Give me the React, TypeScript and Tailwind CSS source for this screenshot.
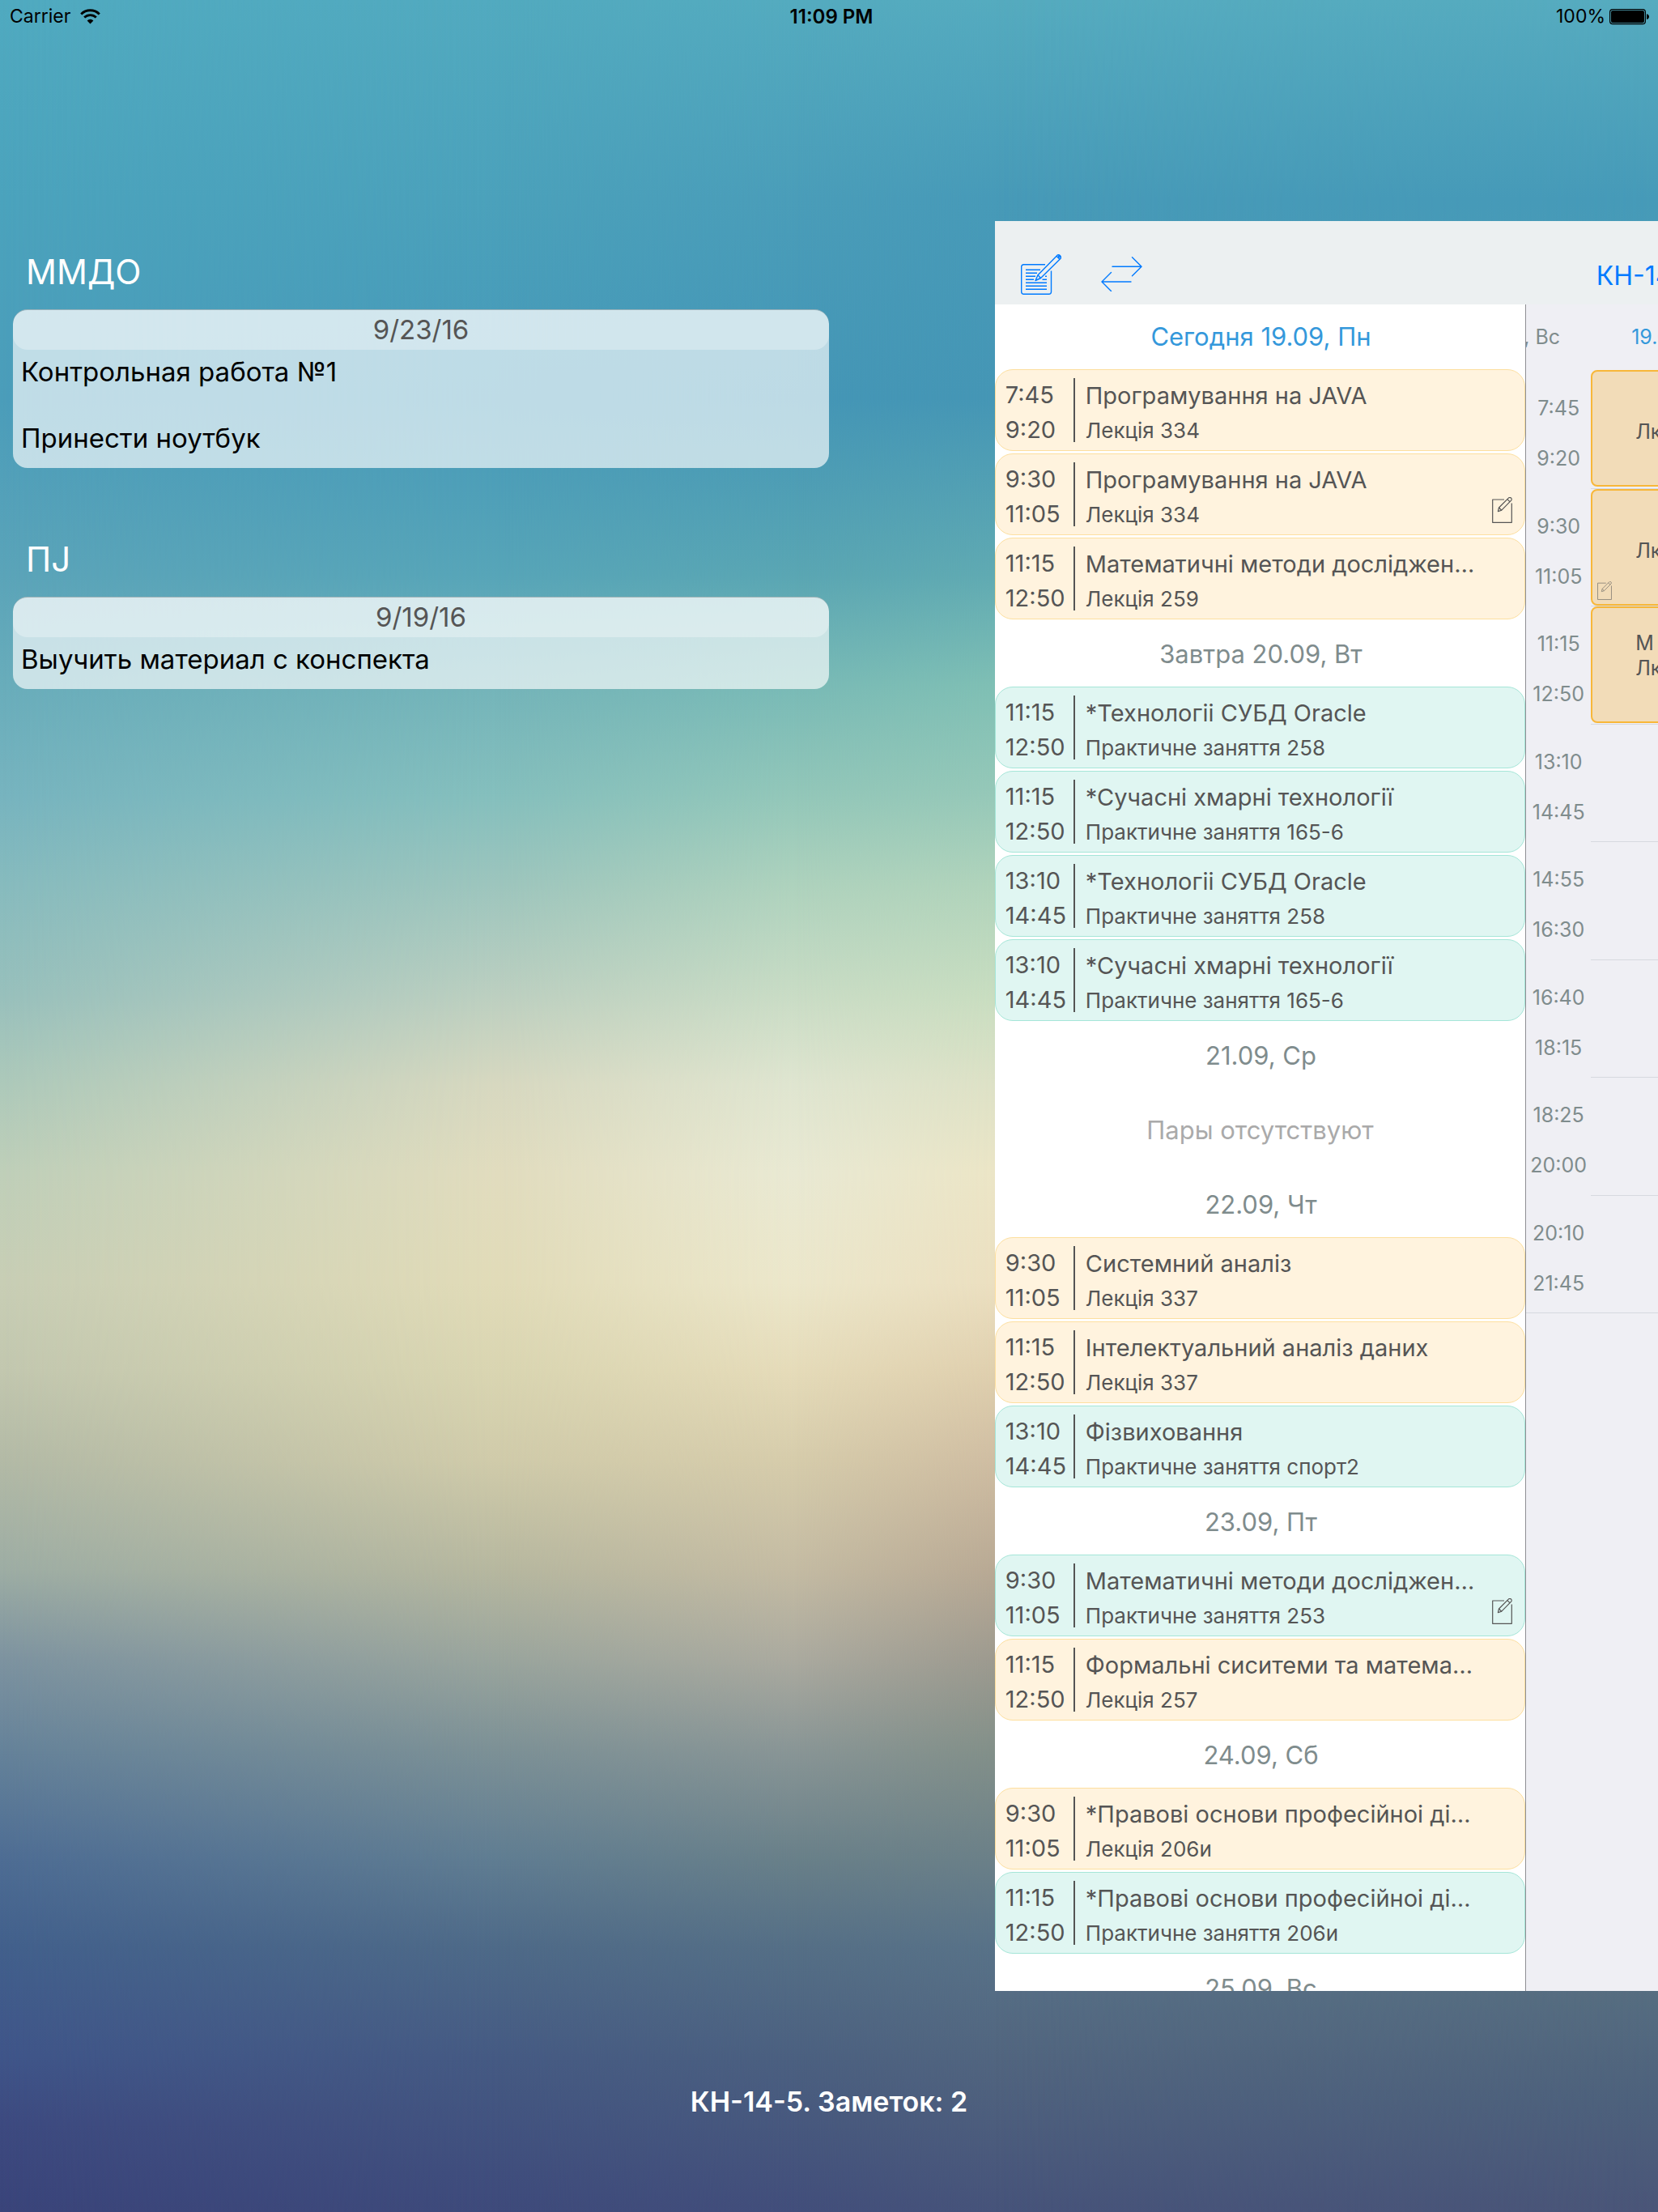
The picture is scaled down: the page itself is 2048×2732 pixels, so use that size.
import type { ReactNode } from "react";

type Kind = "lecture" | "practice";
type Lesson = { from: string; to: string; title: string; place: string; kind: Kind; note?: boolean };
type Day = { label: string; today?: boolean; lessons: Lesson[]; cut?: boolean };

const days: Day[] = [
  {
    label: "Сегодня 19.09, Пн",
    today: true,
    lessons: [
      { from: "7:45", to: "9:20", title: "Програмування на JAVA", place: "Лекція 334", kind: "lecture" },
      { from: "9:30", to: "11:05", title: "Програмування на JAVA", place: "Лекція 334", kind: "lecture", note: true },
      { from: "11:15", to: "12:50", title: "Математичні методи досліджен…", place: "Лекція 259", kind: "lecture" },
    ],
  },
  {
    label: "Завтра 20.09, Вт",
    lessons: [
      { from: "11:15", to: "12:50", title: "*Технологіі СУБД Oracle", place: "Практичне заняття 258", kind: "practice" },
      { from: "11:15", to: "12:50", title: "*Сучасні хмарні технології", place: "Практичне заняття 165-6", kind: "practice" },
      { from: "13:10", to: "14:45", title: "*Технологіі СУБД Oracle", place: "Практичне заняття 258", kind: "practice" },
      { from: "13:10", to: "14:45", title: "*Сучасні хмарні технології", place: "Практичне заняття 165-6", kind: "practice" },
    ],
  },
  { label: "21.09, Ср", lessons: [] },
  {
    label: "22.09, Чт",
    lessons: [
      { from: "9:30", to: "11:05", title: "Системний аналіз", place: "Лекція 337", kind: "lecture" },
      { from: "11:15", to: "12:50", title: "Інтелектуальний аналіз даних", place: "Лекція 337", kind: "lecture" },
      { from: "13:10", to: "14:45", title: "Фізвиховання", place: "Практичне заняття спорт2", kind: "practice" },
    ],
  },
  {
    label: "23.09, Пт",
    lessons: [
      { from: "9:30", to: "11:05", title: "Математичні методи досліджен…", place: "Практичне заняття 253", kind: "practice", note: true },
      { from: "11:15", to: "12:50", title: "Формальні сиситеми та матема…", place: "Лекція 257", kind: "lecture" },
    ],
  },
  {
    label: "24.09, Сб",
    lessons: [
      { from: "9:30", to: "11:05", title: "*Правові основи професійноі ді…", place: "Лекція 206и", kind: "lecture" },
      { from: "11:15", to: "12:50", title: "*Правові основи професійноі ді…", place: "Практичне заняття 206и", kind: "practice" },
    ],
  },
  { label: "25.09, Вс", lessons: [], cut: true },
];

const slots: { from: string; to: string; lines?: string[]; note?: boolean }[] = [
  { from: "7:45", to: "9:20", lines: ["", "Лк", ""] },
  { from: "9:30", to: "11:05", lines: ["", "Лк", ""], note: true },
  { from: "11:15", to: "12:50", lines: ["М", "Лк", ""] },
  { from: "13:10", to: "14:45" },
  { from: "14:55", to: "16:30" },
  { from: "16:40", to: "18:15" },
  { from: "18:25", to: "20:00" },
  { from: "20:10", to: "21:45" },
];

const notes = [
  { subject: "ММДО", date: "9/23/16", text: "Контрольная работа №1\n\nПринести ноутбук" },
  { subject: "ПJ", date: "9/19/16", text: "Выучить материал с конспекта" },
];

function WifiIcon() {
  return (
    <svg viewBox="0 0 25 19" className="h-[19px] w-[25px]" fill="none" stroke="currentColor" strokeWidth="2.8">
      <path d="M1.2 6.4a16 16 0 0 1 22.6 0" />
      <path d="M5.2 10.6a10.4 10.4 0 0 1 14.6 0" />
      <path d="M12.5 18.4 8.6 14.4a5.6 5.6 0 0 1 7.8 0Z" fill="currentColor" stroke="none" />
    </svg>
  );
}

function BatteryIcon() {
  return (
    <svg viewBox="0 0 50 20" className="h-5 w-[50px]" fill="none">
      <rect x="0.6" y="0.6" width="43.8" height="18" rx="3.4" stroke="black" strokeWidth="1.2" />
      <rect x="2" y="2" width="41" height="15.2" rx="2.2" fill="black" />
      <path d="M46 6.2c2 .4 3 1.6 3 3.4s-1 3-3 3.4Z" fill="black" />
    </svg>
  );
}

function ComposeIcon() {
  return (
    <svg viewBox="0 0 51 51" className="size-[51px]" fill="none" stroke="currentColor" strokeWidth="1.4" strokeLinejoin="round">
      <path d="M30 13.7H3.6A3 3 0 0 0 .7 16.6v30.8a3 3 0 0 0 2.9 2.9h31a3 3 0 0 0 2.9-2.9V21.4" />
      <path d="M6 20.3h18M6 24.3h14M6 28.3h12M6 32.3h10M6 36.3h26M6 40.3h26M6 44.3h26M30 28.3h2M26.500 32.3H32" />
      <path d="M18 33.500 21 26.800 45.300 1.900a3.200 3.200 0 0 1 4 4L24.500 30.500Z" />
      <path d="M21 26.800l3.500 3.700M44 3.300l4 4" />
      <circle cx="47.400" cy="3.800" r="1" />
    </svg>
  );
}

function SwapIcon() {
  return (
    <svg viewBox="0 0 51 43" className="h-[43px] w-[51px]" fill="none" stroke="currentColor" strokeWidth="1.4" strokeLinecap="round">
      <path d="M14 12.300h36M38.500.8 50 12.300 38.500 23.800" />
      <path d="M37 31H1M12.500 19.500 1 31l11.500 11.500" />
    </svg>
  );
}

function NoteIcon({ className }: { className: string }) {
  return (
    <svg viewBox="0 0 25 32" className={className} fill="none" stroke="currentColor" strokeWidth="1.2" strokeLinejoin="round">
      <path d="M15 3H.7v28.300h23.600V7.500" />
      <path d="M7.400 17.600l1.100-4.600L20.300 1.200a2 2 0 0 1 3.300 3L11.800 16.200Z" />
      <path d="M18.900 2.600l3 3M8.500 13l3.300 3.200" />
    </svg>
  );
}

const cardTone: Record<Kind, string> = {
  lecture: "border-[#fddf9f] bg-[#fff3de]",
  practice: "border-[#a5e6d8] bg-[#e0f6f2]",
};

function LessonCard({ lesson }: { lesson: Lesson }) {
  return (
    <li className={`relative mb-[3px] flex h-[101px] items-center rounded-[22px] border pl-3 text-[#555555] ${cardTone[lesson.kind]}`}>
      <div className="flex w-[84px] shrink-0 flex-col pt-1 text-[29px] leading-[43px]">
        <span>{lesson.from}</span>
        <span>{lesson.to}</span>
      </div>
      <div className="h-[79px] w-[2px] shrink-0 bg-[#555555]" />
      <div className="flex min-w-0 flex-1 flex-col pt-[6px] pl-[13px] leading-[43px] whitespace-nowrap">
        <span className="text-[29px]">{lesson.title}</span>
        <span className="text-[26px]">{lesson.place}</span>
      </div>
      {lesson.note && <NoteIcon className="absolute right-[15px] bottom-[14px] h-8 w-[25px]" />}
    </li>
  );
}

function DayHeading({ today, children }: { today?: boolean; children: ReactNode }) {
  return (
    <h2 className={`flex h-20 items-center justify-center pl-[2px] text-[31px] ${today ? "text-[#3498db]" : "text-[#7f8c8d]"}`}>
      {children}
    </h2>
  );
}

function Agenda() {
  return (
    <div className="h-full w-4/5 shrink-0 overflow-hidden bg-white">
      {days.map((day) => (
        <section key={day.label}>
          <DayHeading today={day.today}>{day.label}</DayHeading>
          {day.lessons.length > 0 ? (
            <ul>
              {day.lessons.map((lesson, i) => (
                <LessonCard key={i} lesson={lesson} />
              ))}
            </ul>
          ) : (
            !day.cut && <p className="flex h-[104px] items-center justify-center text-[31px] text-[#aaaaaa]">Пары отсутствуют</p>
          )}
        </section>
      ))}
    </div>
  );
}

function WeekGrid() {
  return (
    <div className="min-w-0 flex-1 overflow-hidden border-l border-[#8e8e93] bg-[#efeff4] text-[25px] whitespace-nowrap text-[#7f8c8d]">
      <div className="flex h-[81px] items-center">
        <span className="ml-[-3px] w-[133px] shrink-0">, Вс</span>
        <span className="text-[#3498db]">19.09, Пн</span>
      </div>
      <div className="grid h-[1165px] grid-rows-8 border-b border-[#d6d9df]">
        {slots.map((slot, i) => (
          <div key={slot.from} className="flex min-h-0">
            <div className="flex w-20 shrink-0 flex-col items-center pt-4 leading-[62px]">
              <span>{slot.from}</span>
              <span>{slot.to}</span>
            </div>
            <div className={`min-w-0 flex-1 ${i > 0 ? "border-t border-[#d6d9df]" : ""}`}>
              {slot.lines && (
                <div className="relative mr-[-20px] flex h-[144px] flex-col rounded-[8px] border-2 border-[#f8b739] bg-[#f2dcb8] pt-7 pl-[53px] leading-[31px] text-[#555555]">
                  {slot.lines.map((line, n) => (
                    <span key={n} className="h-[31px]">
                      {line}
                    </span>
                  ))}
                  {slot.note && <NoteIcon className="absolute bottom-[5px] left-[6px] h-[23px] w-[18px] text-[#8a8378]" />}
                </div>
              )}
            </div>
          </div>
        ))}
      </div>
    </div>
  );
}

function NoteList() {
  return (
    <section className="ml-4 flex w-[1008px] flex-col gap-[50px]">
      {notes.map((note) => (
        <article key={note.subject}>
          <h2 className="flex h-[109px] items-center pt-4 pl-4 text-[42px] text-white">{note.subject}</h2>
          <div className="overflow-hidden rounded-[18px] border-t border-black/20 bg-white/65">
            <div className="flex h-[49px] items-center justify-center rounded-[18px] bg-white/30 text-[33px] text-[#555555]">
              {note.date}
            </div>
            <p className="px-[10px] pt-[7px] pb-4 text-[33px] leading-[41px] whitespace-pre-line text-black">{note.text}</p>
          </div>
        </article>
      ))}
    </section>
  );
}

function Backdrop() {
  return (
    <div className="absolute inset-0 -z-10 bg-[linear-gradient(to_bottom,#50aac0_0%,#4ba3bd_9%,#4b9dba_18%,#5ba4b9_26%,#69adbb_31%,#77b4bf_36%,#87bbbe_40%,#98c0bc_45%,#adc9ba_49%,#bfcfb9_53%,#c8ceb5_58%,#c2c7af_62%,#b3baa6_66%,#9dada4_71%,#7d93a0_75%,#66839a_79%,#4e6d94_84%,#42608c_88%,#3f5589_93%,#3d4a80_96%,#3a447a_100%)]">
      <div className="absolute inset-0 bg-[linear-gradient(to_bottom,#52aabf_0%,#4ba1bb_9%,#4699b8_18%,#57a5b8_26%,#74b4b9_31%,#85bfbd_36%,#9dc5bd_40%,#bccfc0_45%,#d7d8c0_49%,#e1dcbe_53%,#e1dbb8_58%,#d9d5b1_62%,#d0cbaa_66%,#b6b79f_71%,#9aa59d_75%,#7d9196_79%,#607d92_84%,#4e6a88_88%,#455a83_93%,#3e4a7b_100%)] [mask-image:linear-gradient(to_right,transparent_0%,black_30%)]" />
      <div className="absolute inset-0 bg-[linear-gradient(to_bottom,#54abbf_0%,#4a9db9_9%,#4496b6_18%,#5aa6b3_26%,#79bab6_31%,#93c7b9_36%,#aed2bd_40%,#c9dcc5_45%,#dfe5d0_49%,#e9e9d3_53%,#ece7cb_58%,#e5dbb9_62%,#d6ccab_66%,#c4bba3_71%,#abaa9f_75%,#8a9696_79%,#698089_84%,#556f86_88%,#4b6080_93%,#424e7b_100%)] [mask-image:linear-gradient(to_right,transparent_30%,black_48%)]" />
      <div className="absolute inset-0 bg-[linear-gradient(to_bottom,#55abbf_0%,#479ab8_9%,#4596b5_18%,#60aab2_26%,#7fbfb4_31%,#96c8b8_36%,#b0d3bb_40%,#c8ddc0_45%,#dde1c6_49%,#ebe5c6_53%,#ebdfc0_58%,#dfcfae_62%,#cfbda2_66%,#b8a994_71%,#9d9a8f_75%,#839089_79%,#6b8088_84%,#587288_88%,#51657f_93%,#46537a_100%)] [mask-image:linear-gradient(to_right,transparent_48%,black_60%)]" />
      <div className="absolute inset-0 bg-[linear-gradient(to_bottom,#56abbf_0%,#469ab8_9%,#4d9db5_18%,#7fb9b4_32%,#b9d2bb_45%,#d9d5b8_55%,#b9a68e_68%,#7f8790_80%,#566d80_90%,#4d617c_95%,#4a5578_100%)] [mask-image:linear-gradient(to_right,transparent_60%,black_100%)]" />
    </div>
  );
}

export default function App() {
  return (
    <div className="relative isolate grid h-screen w-full grid-rows-[10vh_80vh_10vh] overflow-hidden font-['Inter','Noto_Sans',sans-serif]">
      <Backdrop />
      <header className="grid h-[41px] grid-cols-3 items-center pr-[10px] pl-3 text-[23px] text-black">
        <div className="flex items-center gap-3">
          <span>Carrier</span>
          <WifiIcon />
        </div>
        <time className="pl-1 text-center text-[24px] font-semibold">11:09 PM</time>
        <div className="flex items-center justify-end gap-[5px]">
          <span>100%</span>
          <BatteryIcon />
        </div>
      </header>
      <main className="flex min-h-0 justify-between">
        <NoteList />
        <div className="flex w-2/5 flex-col overflow-hidden">
          <nav className="flex h-[103px] shrink-0 items-end bg-[#ecf0f1] pb-3 pl-8 text-[#007aff]">
            <button type="button" aria-label="Заметки" className="mr-12">
              <ComposeIcon />
            </button>
            <button type="button" aria-label="Сменить группу" className="mb-1">
              <SwapIcon />
            </button>
            <div className="min-w-0 flex-1 overflow-hidden pl-[561px] whitespace-nowrap">
              <button type="button" className="text-[32px] leading-[46px]">
                КН-14-5
              </button>
            </div>
          </nav>
          <div className="flex min-h-0 flex-1">
            <Agenda />
            <WeekGrid />
          </div>
        </div>
      </main>
      <footer className="flex items-center justify-center text-[34px] font-semibold text-white">КН-14-5. Заметок: 2</footer>
    </div>
  );
}
